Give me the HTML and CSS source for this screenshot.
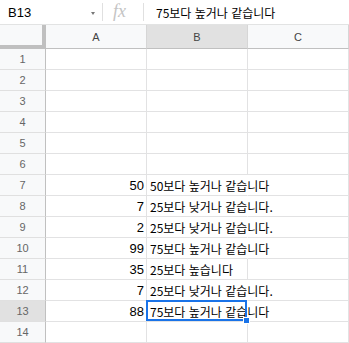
FILE: index.html
```html
<!DOCTYPE html>
<html lang="ko">
<head>
<meta charset="utf-8">
<link rel="stylesheet" href="styles.css">
</head>
<body>
<div class="app">
  <div class="fbar">
    <div class="namebox">B13</div>
    <div class="caret"></div>
    <div class="sep"></div>
    <div class="fx">fx</div>
    <div class="sep"></div>
    <div class="formula">75보다 높거나 같습니다</div>
  </div>
  <div class="grid">
    <div class="corner"></div>
    <div class="ch">A</div>
    <div class="ch sel">B</div>
    <div class="ch">C</div>

    <div class="rh">1</div><div class="c"></div><div class="c"></div><div class="c"></div>
    <div class="rh">2</div><div class="c"></div><div class="c"></div><div class="c"></div>
    <div class="rh">3</div><div class="c"></div><div class="c"></div><div class="c"></div>
    <div class="rh">4</div><div class="c"></div><div class="c"></div><div class="c"></div>
    <div class="rh">5</div><div class="c"></div><div class="c"></div><div class="c"></div>
    <div class="rh">6</div><div class="c"></div><div class="c"></div><div class="c"></div>
    <div class="rh">7</div><div class="c num">50</div><div class="c txt ov">50보다 높거나 같습니다</div><div class="c"></div>
    <div class="rh">8</div><div class="c num">7</div><div class="c txt ov">25보다 낮거나 같습니다.</div><div class="c"></div>
    <div class="rh">9</div><div class="c num">2</div><div class="c txt ov">25보다 낮거나 같습니다.</div><div class="c"></div>
    <div class="rh">10</div><div class="c num">99</div><div class="c txt ov">75보다 높거나 같습니다</div><div class="c"></div>
    <div class="rh">11</div><div class="c num">35</div><div class="c txt">25보다 높습니다</div><div class="c"></div>
    <div class="rh">12</div><div class="c num">7</div><div class="c txt ov">25보다 낮거나 같습니다.</div><div class="c"></div>
    <div class="rh sel">13</div><div class="c num">88</div><div class="c txt ov active">75보다 높거나 같습니다<span class="selbox"></span><span class="handle"></span></div><div class="c"></div>
    <div class="rh">14</div><div class="c"></div><div class="c"></div><div class="c"></div>
  </div>
</div>
</body>
</html>
```

FILE: styles.css
```css
* { box-sizing: border-box; }
html, body { margin: 0; padding: 0; background: #fff; }
body { width: 349px; height: 343px; overflow: hidden; font-family: "Liberation Sans", Arial, sans-serif; }

.app { display: flex; flex-direction: column; }

.fbar {
  height: 25px;
  border-bottom: 1px solid #e2e3e3;
  display: flex;
  align-items: center;
}
.namebox {
  width: 91px;
  padding-left: 8px;
  font-size: 13px;
  color: #000;
}
.caret {
  width: 0; height: 0;
  border-left: 2.5px solid transparent;
  border-right: 2.5px solid transparent;
  border-top: 3px solid #777;
  margin-top: 2px;
}
.sep {
  width: 1px;
  height: 18px;
  background: #e0e0e0;
  margin-left: 7px;
}
.fx {
  font-family: "Liberation Serif", "DejaVu Serif", serif;
  font-style: italic;
  font-size: 18px;
  color: #c4c4c4;
  width: 40px;
  padding-left: 10px;
  margin-top: -2px;
}
.fbar .fx + .sep { margin-left: 0; }
.formula {
  padding-left: 12px;
  font-family: "Noto Sans CJK KR", "Liberation Sans", sans-serif;
  font-size: 12px;
  color: #000;
}

.grid {
  display: grid;
  grid-template-columns: 46px 101px 101px 101px;
  grid-template-rows: 24px repeat(14, 21px);
}
.corner {
  background: #f8f9fa;
  border-right: 4px solid #c0c0c0;
  border-bottom: 4px solid #c0c0c0;
}
.ch {
  background: #f8f9fa;
  border-right: 1px solid #d6d6d6;
  border-bottom: 1px solid #c0c0c0;
  display: flex;
  align-items: center;
  justify-content: center;
  font-size: 11px;
  color: #444;
}
.ch.sel, .rh.sel { background: #e1e1e1; }
.rh {
  background: #f8f9fa;
  border-right: 1px solid #c0c0c0;
  border-bottom: 1px solid #e0e0e0;
  display: flex;
  align-items: center;
  justify-content: center;
  font-size: 11px;
  color: #666;
}
.c {
  border-right: 1px solid #e2e2e3;
  border-bottom: 1px solid #e2e2e3;
  display: flex;
  align-items: center;
  padding: 0 2px 0 3px;
  white-space: nowrap;
  font-size: 13px;
  color: #000;
  min-width: 0;
}
.num { justify-content: flex-end; }
.txt {
  font-family: "Noto Sans CJK KR", "Liberation Sans", sans-serif;
  font-size: 12px;
  overflow: visible;
}
.ov { border-right-color: transparent; }
.active { position: relative; }
.selbox {
  position: absolute;
  left: -1px; top: -1px;
  width: 101px; height: 21px;
  border: 2px solid #1a73e8;
}
.handle {
  position: absolute;
  left: 96px; top: 16px;
  width: 7px; height: 7px;
  background: #1a73e8;
  border: 1px solid #fff;
}
```
